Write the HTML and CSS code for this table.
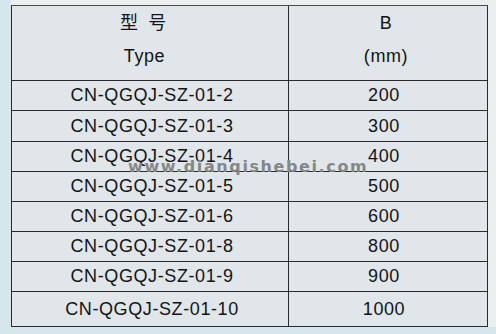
FILE: index.html
```html
<!DOCTYPE html>
<html lang="zh">
<head>
<meta charset="utf-8">
<title>型号 Type</title>
<link rel="stylesheet" href="styles.css">
</head>
<body>
<div class="sheet">
  <div class="paper">
    <div class="spec">
      <div class="cell head name"><span class="cjk">型 号</span><span>Type</span></div>
      <div class="cell head size"><span>B</span><span>(mm)</span></div>

      <div class="cell name r30">CN-QGQJ-SZ-01-2</div><div class="cell size r30">200</div>
      <div class="cell name r31">CN-QGQJ-SZ-01-3</div><div class="cell size r31">300</div>
      <div class="cell name r30">CN-QGQJ-SZ-01-4</div><div class="cell size r30">400</div>
      <div class="cell name r30">CN-QGQJ-SZ-01-5</div><div class="cell size r30">500</div>
      <div class="cell name r30">CN-QGQJ-SZ-01-6</div><div class="cell size r30">600</div>
      <div class="cell name r30">CN-QGQJ-SZ-01-8</div><div class="cell size r30">800</div>
      <div class="cell name r30">CN-QGQJ-SZ-01-9</div><div class="cell size r30">900</div>
      <div class="cell name r35">CN-QGQJ-SZ-01-10</div><div class="cell size r35">1000</div>
    </div>
  </div>
  <div class="watermark">www.dianqishebei.com</div>
</div>
</body>
</html>
```
FILE: styles.css
```css
html, body {
  margin: 0;
  padding: 0;
}
body {
  background: #d5e6ec;
  width: 496px;
  height: 334px;
  overflow: hidden;
  font-family: "Liberation Sans", "Noto Sans CJK SC", sans-serif;
  color: #141414;
}
.sheet {
  position: relative;
  padding-left: 11px;
}
.paper {
  background: #eceff0;
  padding-top: 5px;
  padding-right: 8px;
}
.spec {
  display: grid;
  grid-template-columns: 277px 199px;
  width: 477px;
  box-sizing: border-box;
  border-left: 1px solid #2a2a2a;
  border-top: 1px solid #4a4a4a;
  background: #e0e6e9;
}
.cell {
  box-sizing: border-box;
  border-right: 1px solid #2a2a2a;
  border-bottom: 1px solid #2a2a2a;
  display: flex;
  align-items: center;
  justify-content: center;
  font-size: 18px;
  letter-spacing: 0.6px;
  white-space: nowrap;
}
.cell.name {
  padding-left: 4px;
}
.cell.size {
  padding-right: 8px;
}
.head {
  height: 75px;
  flex-direction: column;
  justify-content: flex-start;
  padding-top: 1px;
  line-height: 33px;
}
.head.name {
  padding-left: 0;
  padding-right: 11px;
}
.head.size {
  padding-right: 4px;
}
.cjk {
  letter-spacing: 2.6px;
}
.r30 { height: 30px; }
.r31 { height: 31px; }
.r35 { height: 35px; }
.watermark {
  position: absolute;
  left: 128px;
  top: 158px;
  font-family: "DejaVu Sans", sans-serif;
  font-size: 16px;
  line-height: 18px;
  font-weight: bold;
  letter-spacing: 1.6px;
  color: #858687;
  white-space: nowrap;
}
```
